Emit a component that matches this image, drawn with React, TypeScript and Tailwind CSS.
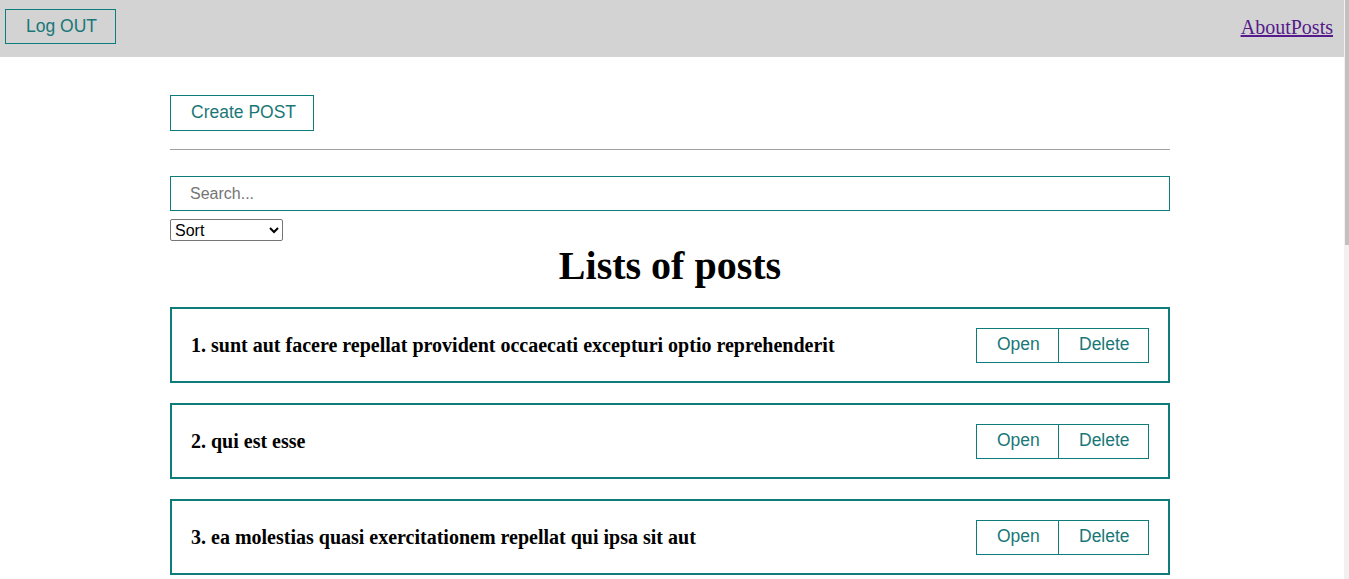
import React from "react";

const posts = [
  { id: 1, title: "sunt aut facere repellat provident occaecati excepturi optio reprehenderit" },
  { id: 2, title: "qui est esse" },
  { id: 3, title: "ea molestias quasi exercitationem repellat qui ipsa sit aut" },
];

const btn =
  "block whitespace-nowrap border border-[#0f7c7c] text-[#1a7777] bg-transparent px-[20px] h-[35px] text-[17.5px] leading-none font-['Liberation_Sans',Arial,sans-serif]";

export default function App() {
  return (
    <div className="h-[579px] overflow-hidden flex bg-white font-['Liberation_Serif','Times_New_Roman',serif] text-black">
      <div className="flex-1 min-w-0">
        <div className="h-[57px] bg-[#d3d3d3] flex items-start justify-between pl-[5px] pr-[11px]">
          <button className={btn + " mt-[9px] w-[111px]"}>Log OUT</button>
          <div className="mt-[12px] text-[20px] text-[#551a8b] underline">
            <a href="#">About</a>
            <a href="#">Posts</a>
          </div>
        </div>
        <div className="w-[1000px] ml-[170px] pt-[38px]">
          <button className={btn + " w-[144px] h-[36px]"}>Create POST</button>
          <hr className="mt-[18px] mb-[26px] border-0 border-t border-[#a0a0a0]" />
          <input
            placeholder="Search..."
            className="block w-full h-[35px] border border-[#0f7c7c] px-[19px] text-[16px] font-['Liberation_Sans',Arial,sans-serif] placeholder:text-[#757575] outline-none"
          />
          <select className="mt-[8px] block w-[113px] h-[22px] border border-[#767676] rounded-[2px] text-[16px] bg-white font-['Liberation_Sans',Arial,sans-serif]">
            <option>Sort</option>
            <option>By title</option>
            <option>By description</option>
          </select>
          <h1 className="text-center font-bold text-[40px] leading-[50px] mt-0 mb-[16px]">
            Lists of posts
          </h1>
          <div className="flex flex-col gap-[20px]">
            {posts.map((p) => (
              <div
                key={p.id}
                className="h-[76px] border-2 border-[#0f7c7c] flex items-center justify-between pl-[19px] pr-[19px]"
              >
                <strong className="text-[20px]">
                  {p.id}. {p.title}
                </strong>
                <div className="flex">
                  <button className={btn + " w-[83px]"}>Open</button>
                  <button className={btn + " w-[91px] -ml-px"}>Delete</button>
                </div>
              </div>
            ))}
          </div>
        </div>
      </div>
      <div className="w-[5px] bg-[#f1f1f1] flex flex-col">
        <div className="h-[245px] ml-[1px] bg-[#c1c1c1]" />
      </div>
    </div>
  );
}
